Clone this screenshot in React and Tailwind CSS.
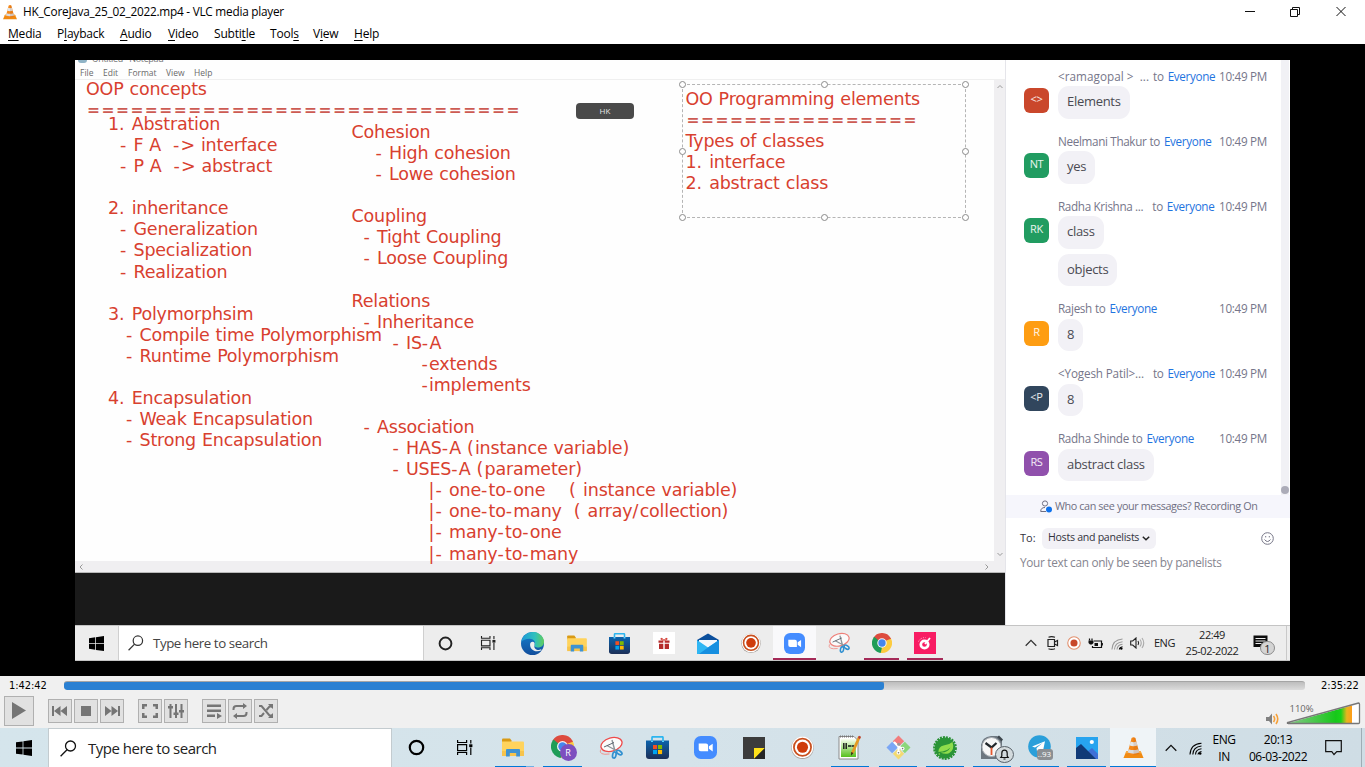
import React from "react";

/* ---------- icons ---------- */

const Cone = ({ size = 16 }) => (
  <svg width={size} height={size} viewBox="0 0 24 24">
    <path d="M4.5 16h15l3 7h-21z" fill="#f08a12" />
    <path d="M4.5 16h15l.8 2H3.7z" fill="#f9a83c" />
    <path d="M10 2.2Q12 .6 14 2.2l4.3 16.4q-6.300 3-12.600 0z" fill="#f5881a" />
    <path d="M9 5.800q3 1.200 6 0l1.100 4.200q-4.100 1.400-8.200 0z" fill="#e3e7ea" />
    <path d="M6.900 13.700q5.100 1.800 10.200 0l1 3.600q-6.100 2.400-12.200 0z" fill="#dadde0" />
    <path d="M12 1.500q1.300 0 2 .7l4.300 16.400q-3 1.500-6.300 1.500z" fill="#a84300" opacity=".16" />
  </svg>
);

const WinLogo = ({ size = 16 }) => (
  <svg width={size} height={size} viewBox="0 0 16 16" fill="#000">
    <path d="M0 2.300 6.600 1.400v6.200H0zM7.400 1.250 16 0v7.600H7.400zM0 8.400h6.600v6.200L0 13.700zM7.400 8.400H16V16l-8.600-1.200z" />
  </svg>
);

const Search = ({ size = 17, color = "#111" }) => (
  <svg width={size} height={size} viewBox="0 0 17 17" fill="none" stroke={color} strokeWidth="1.300">
    <circle cx="10.500" cy="6" r="5" />
    <path d="M7 9.700.6 16.200" />
  </svg>
);

const Cortana = ({ size = 17, color = "#000" }) => (
  <svg width={size} height={size} viewBox="0 0 17 17" fill="none" stroke={color} strokeWidth="2.200">
    <circle cx="8.500" cy="8.500" r="6.700" />
  </svg>
);

const TaskView = ({ size = 17, color = "#000" }) => (
  <svg width={size} height={size} viewBox="0 0 17 17" fill="none" stroke={color} strokeWidth="1.200">
    <path d="M1.600 1v2.500h9V1M1.600 16v-2.500h9V16" />
    <path d="M1.600 5.600h9v6h-9zM14.800 1v3.400M14.800 8.500V16" />
    <path d="M13.200 5.300h3.200v2.800h-3.200z" fill={color} stroke="none" />
  </svg>
);

const Folder = ({ w = 22, h = 19 }) => (
  <svg width={w} height={h} viewBox="0 0 22 19">
    <path d="M0 1.500Q0 .5 1 .5h7l1.500 2V5H0z" fill="#d99a14" />
    <path d="M0 3.500h21q1 0 1 1V17H0z" fill="#ffd35c" />
    <path d="M0 13h22v5H0z" fill="#f7c44c" />
    <path d="M4 18.500V12q0-1 1-1h12q1 0 1 1v6.500h-3.800V15H7.800v3.500z" fill="#3f93d2" />
  </svg>
);

const Chrome = ({ size = 22 }) => (
  <svg width={size} height={size} viewBox="0 0 24 24">
    <path d="M12 12 1.600 6A12 12 0 0 1 22.400 6z" fill="#dd4b3e" />
    <path d="M12 12 22.400 6A12 12 0 0 1 12 24z" fill="#fccb3f" />
    <path d="M12 12v12A12 12 0 0 1 1.600 6z" fill="#1f9d58" />
    <path d="M12 6h10.400a12 12 0 0 1 .5 1L17 9z" fill="#dd4b3e" />
    <path d="m17.200 15-5.200 9-1.500-.1L12 17z" fill="#fccb3f" />
    <path d="M6.800 15 1.600 6l1-1.400L8 9z" fill="#1f9d58" />
    <circle cx="12" cy="12" r="5.700" fill="#f4f6f8" />
    <circle cx="12" cy="12" r="4.400" fill="#4686ee" />
  </svg>
);

const ChromeProfile = () => (
  <div className="relative h-[26px] w-[24px]">
    <Chrome size={23} />
    <span className="absolute left-[9px] top-[9px] flex h-[17px] w-[17px] items-center justify-center rounded-full bg-[#7d4fbf] text-[9px] leading-none text-white">R</span>
  </div>
);

const Snip = ({ size = 24, faded = false }) => (
  <svg width={size} height={size} viewBox="0 0 24 24" fill="none">
    <ellipse cx="12.500" cy="8.500" rx="10.800" ry="6.600" transform="rotate(-16 12.500 8.500)" fill="#fbfbfb" stroke={faded ? "#ee7f78" : "#ee4a4a"} strokeWidth="1.300" />
    <path d="M1.500 13.500q-2 6 9 4.500" stroke="#f08d86" strokeWidth=".9" />
    <path d="M8 9.500 18 15M13 4l3 11" stroke="#8d949a" strokeWidth="1.400" />
    <path d="m5 11 10-4.500" stroke="#5c6670" strokeWidth="1" />
    <ellipse cx="15.300" cy="19" rx="1.700" ry="3.100" transform="rotate(12 15.300 19)" stroke="#2f8fd0" strokeWidth="1.700" />
    <ellipse cx="20.300" cy="16.600" rx="1.700" ry="3" transform="rotate(-55 20.300 16.600)" stroke="#2f8fd0" strokeWidth="1.700" />
  </svg>
);

const Store = ({ size = 23 }) => (
  <svg width={size} height={size} viewBox="0 0 23 23">
    <defs>
      <linearGradient id="storeBody" x1="0" y1="0" x2="0" y2="1">
        <stop offset="0" stopColor="#0b63ad" />
        <stop offset="1" stopColor="#1c2f57" />
      </linearGradient>
    </defs>
    <path d="M6 6V1.500Q6 .8 6.700.8h9.600q.7 0 .7.700V6" fill="none" stroke="#2cb5ef" strokeWidth="1.700" />
    <path d="M0 4.500h23V20q0 3-3 3H3q-3 0-3-3z" fill="url(#storeBody)" />
    <path d="M5 4.500h2V6H5zM16 4.500h2V6h-2z" fill="#5fd0fa" />
    <path d="M7 9h4.100v4.100H7z" fill="#f25022" />
    <path d="M12 9h4.100v4.100H12z" fill="#7fba00" />
    <path d="M7 14h4.100v4.100H7z" fill="#00a4ef" />
    <path d="M12 14h4.100v4.100H12z" fill="#ffb900" />
  </svg>
);

const Zoom = ({ size = 22 }) => (
  <svg width={size} height={size} viewBox="0 0 22 22">
    <rect width="22" height="22" rx="6.500" fill="#448cff" />
    <path d="M4.500 7.200h7q2 0 2 2v5.500h-7q-2 0-2-2zM14.300 9.800l3.600-2.500v7.500l-3.600-2.500z" fill="#fff" />
  </svg>
);

const Sticky = () => (
  <svg width="22" height="22" viewBox="0 0 22 22">
    <path d="M0 0h22v22H0z" fill="#3c3c3c" />
    <path d="M11 11h11L11 22z" fill="#ffe11a" />
    <path d="M22 11v11H11z" fill="#262626" />
  </svg>
);

const Recorder = ({ size = 22 }) => (
  <svg width={size} height={size} viewBox="0 0 22 22">
    <circle cx="11" cy="11.300" r="10.700" fill="#a9a29d" />
    <circle cx="11" cy="10.800" r="10.300" fill="#fff" />
    <circle cx="11" cy="10.800" r="8.200" fill="none" stroke="#c9501f" strokeWidth="1.700" />
    <circle cx="11" cy="10.800" r="5.300" fill="#cf3c0c" />
  </svg>
);

const NotepadPP = () => (
  <svg width="24" height="25" viewBox="0 0 24 25">
    <defs>
      <linearGradient id="npGreen" x1="0" y1="0" x2="0" y2="1">
        <stop offset="0" stopColor="#fafff2" />
        <stop offset="1" stopColor="#56c01d" />
      </linearGradient>
    </defs>
    <path d="M1 1.500h15l4 4V24H1z" fill="#fff" stroke="#8b8b8b" strokeWidth="1" />
    <path d="M3 4h15v18H3z" fill="url(#npGreen)" />
    <path d="M2 1.500h14" stroke="#777" strokeWidth="1.800" strokeDasharray="1 1" />
    <path d="M5.800 8v6M8.200 8v6M10 11h3M13.500 11h2.500" stroke="#161616" strokeWidth="1.400" />
    <path d="m21.500 1.500-7.200 16.700" stroke="#e59a22" strokeWidth="2.800" />
    <path d="m21 .8 2 1-1 2.200-2-1z" fill="#b63b3b" />
    <path d="m13.200 17 2.300 1-2.500 2.700z" fill="#3a2a16" />
  </svg>
);

const Git = () => (
  <svg width="25" height="25" viewBox="0 0 25 25">
    <g transform="rotate(45 12.500 12.500)">
      <path d="M4 4h8v8H4z" fill="#f27d7d" />
      <path d="M13 4h8v8h-8z" fill="#8cd67a" />
      <path d="M4 13h8v8H4z" fill="#7ba7f5" />
      <path d="M13 13h8v8h-8z" fill="#f3da72" />
    </g>
    <path d="m8 7 4.500 4.500V18M12.500 11.500l4 2.200" fill="none" stroke="#fff" strokeWidth="2" />
    <circle cx="12.700" cy="9.300" r="1.500" fill="#999" />
    <circle cx="12.500" cy="17.700" r="1.900" fill="#fff" />
    <circle cx="16.600" cy="13.600" r="1.900" fill="#fff" />
    <circle cx="12.500" cy="17.700" r=".8" fill="#777" />
    <circle cx="16.600" cy="13.600" r=".8" fill="#777" />
  </svg>
);

const Spring = () => (
  <svg width="24" height="24" viewBox="0 0 24 24">
    <circle cx="12" cy="12" r="10.700" fill="none" stroke="#2a9135" strokeWidth="2.400" strokeDasharray="2 1" />
    <circle cx="12" cy="12" r="10.400" fill="#2a9437" />
    <path d="M19.500 6q2.500 8-3.500 11.200-4 1.500-8.500-.7 6.500.7 10-5-3.500 3.500-8 4-3 .2-4.100.5Q5.500 10.500 10.500 9.500q5.500-.5 9-3.500z" fill="#8fdc4c" />
    <circle cx="6.300" cy="18" r=".8" fill="#8fdc4c" />
  </svg>
);

const Clock = () => (
  <div className="relative h-[26px] w-[26px]">
    <svg width="25" height="25" viewBox="0 0 25 25">
      <path d="M2 10Q3 2 12 1h6l5 5v18H2z" fill="#6d7780" />
      <path d="m18 2 2-1.500 4 4-1.500 2z" fill="#3e464d" />
      <circle cx="12.500" cy="12" r="9.500" fill="#f7f7f7" stroke="#aab0b5" strokeWidth="1" />
      <path d="m6.500 8 6 4.500 5-4.500" fill="none" stroke="#22272b" strokeWidth="2.300" />
      <path d="M12.500 12.500V20" stroke="#e4572e" strokeWidth="1.800" />
    </svg>
    <svg className="absolute left-[16px] top-[11px]" width="19" height="17" viewBox="0 0 19 17">
      <ellipse cx="9.500" cy="8.500" rx="9" ry="8" fill="#d3dadd" stroke="#59626a" strokeWidth="1" />
      <path d="M5.800 11.500h7.400l-1-1.500V7.200q0-3-2.700-3t-2.700 3V10zM8.500 13h2" fill="none" stroke="#111" strokeWidth="1.200" />
    </svg>
  </div>
);

const Telegram = () => (
  <div className="relative h-[26px] w-[24px]">
    <svg width="23" height="23" viewBox="0 0 23 23">
      <circle cx="11.500" cy="11.500" r="11.300" fill="#2a9fda" />
      <path d="m4 11.500 13-5.300-2.300 11-3.700-2.700-2 2-.5-3.500 6-5-7.500 4.500z" fill="#fff" />
    </svg>
    <span className="absolute left-[9px] top-[14px] flex h-[11px] w-[16px] items-center justify-center rounded-[3px] bg-[#8b8f93] text-[8px] leading-none text-white">..93</span>
  </div>
);

const Photos = () => (
  <svg width="22" height="22" viewBox="0 0 22 22">
    <path d="M0 0h22v22H0z" fill="#27a4ef" />
    <path d="M11 22 7 18l9-7 6 6v5z" fill="#3f6fd6" />
    <path d="m0 11 5-4 15 15H0z" fill="#113a77" />
    <circle cx="15.800" cy="5" r="2.100" fill="#fff" />
  </svg>
);

const Edge = () => (
  <svg width="23" height="23" viewBox="0 0 24 24">
    <defs>
      <linearGradient id="edgeTop" x1="0" y1="0" x2="1" y2="0">
        <stop offset="0" stopColor="#1d98d8" />
        <stop offset=".6" stopColor="#2fc0bd" />
        <stop offset="1" stopColor="#62cd5c" />
      </linearGradient>
      <linearGradient id="edgeBot" x1="0" y1="0" x2="0" y2="1">
        <stop offset="0" stopColor="#1580cf" />
        <stop offset="1" stopColor="#124e9c" />
      </linearGradient>
    </defs>
    <circle cx="12" cy="12" r="12" fill="url(#edgeBot)" />
    <path d="M.2 10.500C2 .5 11 0 13 0c7 .3 11 6 11 10 0 4.500-3.500 6.500-7 6.200-2.800-.2-4-1.400-2.800-2.800C16 10.500 13 7 9 7 5 7 1.500 8.500.2 10.500z" fill="url(#edgeTop)" />
    <path d="M9.500 12.500c-.5 6 5.500 9.500 12 6.500l-.6-1C18 20 13 18 14 13.500c1.500-4-4-4.500-4.500-1z" fill="#ededed" />
  </svg>
);

const Gift = () => (
  <div className="flex h-[22px] w-[22px] items-center justify-center bg-white">
    <svg width="12" height="13" viewBox="0 0 12 13">
      <path d="M.5 3.500h4.800v2.200H.5zM6.700 3.500h4.800v2.200H6.700zM1 6.700h4.300V12H1zM6.700 6.700H11V12H6.700z" fill="#b52b2b" />
      <path d="M5.700 3.200Q3 3.500 2.800 1.700 3.800 0 5.700 3.200zM6.300 3.200Q9 3.500 9.200 1.700 8.200 0 6.300 3.200z" fill="none" stroke="#d43c33" strokeWidth="1" />
    </svg>
  </div>
);

const Mail = () => (
  <svg width="22" height="21" viewBox="0 0 22 21">
    <path d="M0 7 11 .5 22 7v4H0z" fill="#0b4f9c" />
    <path d="M2 7h18v7H2z" fill="#f3f7fb" />
    <path d="M0 7l11 7.500L22 7v14H0z" fill="#2fb6f3" />
    <path d="M22 7v14H2l9-6.500z" fill="#168fe0" />
  </svg>
);

const PinkApp = () => (
  <svg width="22" height="22" viewBox="0 0 22 22">
    <path d="M0 0h22v22H0z" fill="#f81c63" />
    <circle cx="10.500" cy="12.500" r="3.700" fill="none" stroke="#fff" strokeWidth="2.700" />
    <path d="m11 12 5-6" stroke="#fff" strokeWidth="1.800" />
    <path d="M4.500 9.500q2-4 7-4" fill="none" stroke="#ffb3cc" strokeWidth="1" strokeDasharray="1 1" />
  </svg>
);

const Chevron = ({ color = "#111" }) => (
  <svg width="12" height="8" viewBox="0 0 12 8" fill="none" stroke={color} strokeWidth="1.300">
    <path d="m.7 6.700 5.300-5.300 5.300 5.300" />
  </svg>
);

const Wifi = ({ size = 13, dim = "#000" }) => (
  <svg width={size} height={size} viewBox="0 0 13 13" fill="none" strokeWidth="1.100">
    <path d="M1 12.500Q1.500 2 12.500 1.200" stroke={dim} />
    <path d="M3.800 12.500Q4 5 12.500 4" stroke={dim} />
    <path d="M6.500 12.500Q6.700 7.500 12.500 6.800" stroke={dim} />
    <path d="M9 12.500Q9.300 10 12.500 9.500" stroke="#000" />
    <circle cx="11.200" cy="11.500" r="1.300" fill="#000" />
  </svg>
);

/* ---------- VLC window ---------- */

const MenuItem = ({ pre = "", hot, post = "", className }) => (
  <span className={className}>
    {pre}
    <span className="underline decoration-1 underline-offset-[2px]">{hot}</span>
    {post}
  </span>
);

function TitleBar() {
  return (
    <div className="flex h-[23px] items-center bg-white pl-[2px]">
      <Cone size={16} />
      <span className="ml-[5px] w-[1221px] text-[11.800px] tracking-[-0.240px]">HK_CoreJava_25_02_2022.mp4 - VLC media player</span>
      <svg width="110" height="12" viewBox="0 0 110 12" fill="none" stroke="#111" strokeWidth="1">
        <path d="M1 5.500h10" />
        <path d="M46.500 3.500h7v7h-7zM48.500 3.500v-2h7v7h-2" />
        <path d="m92.500 1 9 9m0-9-9 9" />
      </svg>
    </div>
  );
}

function MenuBar() {
  return (
    <div className="flex h-[21px] items-center bg-white pl-[8px] text-[12px] tracking-[-0.200px]">
      <MenuItem className="w-[49px]" hot="M" post="edia" />
      <MenuItem className="w-[63px]" pre="P" hot="l" post="ayback" />
      <MenuItem className="w-[48px]" hot="A" post="udio" />
      <MenuItem className="w-[46px]" hot="V" post="ideo" />
      <MenuItem className="w-[56px]" pre="Subti" hot="t" post="le" />
      <MenuItem className="w-[43px]" pre="Tool" hot="s" />
      <MenuItem className="w-[41px]" pre="V" hot="i" post="ew" />
      <MenuItem className="" hot="H" post="elp" />
    </div>
  );
}

/* ---------- shared notes ---------- */

/* Punctuation is set a little wider than the letters. */
const Line = ({ className = "", children }) => (
  <div className={"h-[21.080px] whitespace-pre " + className}>
    {String(children || " ")
      .split(/([-.()|/]+)/)
      .map((part, i) => (i % 2 ? <span key={i} className="tracking-[1.200px]">{part}</span> : part))}
  </div>
);

const Rule = ({ children }) => (
  <div className="h-[21.080px] pl-[1px] text-[15.500px] font-bold tracking-[1.480px] whitespace-pre text-[#cd5b53]">{children}</div>
);

const noteText = "font-['DejaVu_Sans',sans-serif] text-[17.500px] leading-[21.080px] tracking-[-0.200px] [word-spacing:0.600px] text-[#d8402f]";

function Handle({ className }) {
  return <span className={"absolute h-[7px] w-[7px] rounded-full border border-[#8a8a8a] bg-white " + className} />;
}

function Annotations() {
  return (
    <>
      <div className={"absolute left-[11px] top-[18.500px] " + noteText}>
        <Line>OOP concepts</Line>
        <Rule>==============================</Rule>
      </div>
      <div className={"absolute left-[33px] top-[54px] " + noteText}>
        <Line>1. Abstration</Line>
        <Line className="pl-[12px]">- F A  -&gt; interface</Line>
        <Line className="pl-[12px]">- P A  -&gt; abstract</Line>
        <Line />
        <Line>2. inheritance</Line>
        <Line className="pl-[12px]">- Generalization</Line>
        <Line className="pl-[12px]">- Specialization</Line>
        <Line className="pl-[12px]">- Realization</Line>
        <Line />
        <Line>3. Polymorphsim</Line>
        <Line className="pl-[18px]">- Compile time Polymorphism</Line>
        <Line className="pl-[18px]">- Runtime Polymorphism</Line>
        <Line />
        <Line>4. Encapsulation</Line>
        <Line className="pl-[18px]">- Weak Encapsulation</Line>
        <Line className="pl-[18px]">- Strong Encapsulation</Line>
      </div>
      <div className={"absolute left-[276.500px] top-[62px] " + noteText}>
        <Line>Cohesion</Line>
        <Line className="pl-[24px]">- High cohesion</Line>
        <Line className="pl-[24px]">- Lowe cohesion</Line>
        <Line />
        <Line>Coupling</Line>
        <Line className="pl-[12px]">- Tight Coupling</Line>
        <Line className="pl-[12px]">- Loose Coupling</Line>
        <Line />
        <Line>Relations</Line>
        <Line className="pl-[12px]">- Inheritance</Line>
        <Line className="pl-[41px]">- IS-A</Line>
        <Line className="pl-[70px]">-extends</Line>
        <Line className="pl-[70px]">-implements</Line>
        <Line />
        <Line className="pl-[12px]">- Association</Line>
        <Line className="pl-[41px]">- HAS-A (instance variable)</Line>
        <Line className="pl-[41px]">- USES-A (parameter)</Line>
        <Line className="pl-[77px]">|- one-to-one    ( instance variable)</Line>
        <Line className="pl-[77px]">|- one-to-many  ( array/collection)</Line>
        <Line className="pl-[77px]">|- many-to-one</Line>
        <Line className="pl-[77px]">|- many-to-many</Line>
      </div>
      <div className="absolute left-[501px] top-[43px] flex h-[16px] w-[58px] items-center justify-center rounded-[4px] bg-[#4a4a4a] text-[8px] text-[#e4e4e4]">HK</div>
      <div className={"absolute left-[607px] top-[24px] h-[134px] w-[284px] border border-dashed border-[#b5b5b5] pl-[2.500px] pt-[4px] " + noteText}>
        <Line>OO Programming elements</Line>
        <Rule>================</Rule>
        <Line>Types of classes</Line>
        <Line>1. interface</Line>
        <Line>2. abstract class</Line>
        <Handle className="-left-[4px] -top-[4px]" />
        <Handle className="left-[138px] -top-[4px]" />
        <Handle className="-right-[4px] -top-[4px]" />
        <Handle className="-left-[4px] top-[63px]" />
        <Handle className="-right-[4px] top-[63px]" />
        <Handle className="-left-[4px] -bottom-[4px]" />
        <Handle className="left-[138px] -bottom-[4px]" />
        <Handle className="-right-[4px] -bottom-[4px]" />
      </div>
    </>
  );
}

function SharedScreen() {
  return (
    <div className="relative flex w-[930px] shrink-0 flex-col overflow-hidden bg-[#1a1a1a]">
      <div className="flex h-[513px] flex-col border-b border-[#b9b9b9] bg-[#fefefe]">
        <div className="flex h-[5px] items-end overflow-hidden pb-[2px] pl-[3px] text-[9px] leading-[9px] tracking-[-0.350px] text-[#777]">
          <span className="mr-[5px] h-[3px] w-[9px] rounded-b-sm bg-[#8fb3c6]" />
          <span>Untitled - Notepad</span>
        </div>
        <div className="flex h-[15px] items-center border-b border-[#efefef] pl-[5px] pt-[2px] text-[8.500px] text-[#6a6a6a]">
          <span className="w-[23px]">File</span>
          <span className="w-[25px]">Edit</span>
          <span className="w-[38px]">Format</span>
          <span className="w-[28px]">View</span>
          <span>Help</span>
        </div>
        <div className="flex flex-1">
          <div className="flex-1" />
          <div className="flex w-[11px] flex-col items-center justify-between bg-[#f0eff1] py-[4px]">
            <svg width="6" height="5" viewBox="0 0 6 5" fill="none" stroke="#999"><path d="m.5 4 2.500-2.500L5.500 4" /></svg>
            <svg width="6" height="5" viewBox="0 0 6 5" fill="none" stroke="#999"><path d="m.5 1 2.500 2.500L5.500 1" /></svg>
          </div>
        </div>
        <div className="flex h-[11px] items-center justify-between bg-[#f0eff1] pl-[4px] pr-[16px]">
          <svg width="4" height="6" viewBox="0 0 4 6" fill="none" stroke="#999"><path d="M3.500.5 1 3l2.500 2.500" /></svg>
          <svg width="4" height="6" viewBox="0 0 4 6" fill="none" stroke="#999"><path d="M.5.500 3 3 .5 5.500" /></svg>
        </div>
      </div>
      <Annotations />
    </div>
  );
}

/* ---------- chat ---------- */

const messages = [
  { name: "<ramagopal >  ...", gap: "ml-[4px]", track: "tracking-[0.050px]", initials: "<>", color: "bg-[#ca472b]", texts: ["Elements"] },
  { name: "Neelmani Thakur", gap: "ml-[3px]", track: "", initials: "NT", color: "bg-[#219c61]", texts: ["yes"] },
  { name: "Radha Krishna ...", gap: "ml-[9px]", track: "", initials: "RK", color: "bg-[#219c61]", texts: ["class", "objects"] },
  { name: "Rajesh", gap: "ml-[3px]", track: "", initials: "R", color: "bg-[#fe9d12]", texts: ["8"] },
  { name: "<Yogesh Patil>...", gap: "ml-[9px]", track: "tracking-[-0.150px]", initials: "<P", color: "bg-[#31465d]", texts: ["8"] },
  { name: "Radha Shinde", gap: "ml-[3px]", track: "", initials: "RS", color: "bg-[#9050ac]", texts: ["abstract class"] },
];

function Message({ m }) {
  return (
    <div className="mb-[13.400px]">
      <div className="flex h-[19px] items-center pl-[52px] pr-[14px] text-[11.700px] tracking-[-0.340px] text-[#76768a]">
        <span className={"whitespace-pre " + m.track}>{m.name}</span>
        <span className={m.gap}>to</span>
        <span className="ml-[4px] text-[#1f74e0]">Everyone</span>
        <span className="ml-auto whitespace-nowrap tracking-[-0.300px]">10:49 PM</span>
      </div>
      <div className="flex pl-[18px]">
        <div className={"mt-[2px] flex h-[25px] w-[25px] items-center justify-center rounded-[6px] pb-[2px] text-[11px] tracking-[-0.300px] text-white/90 " + m.color}>{m.initials}</div>
        <div className="ml-[9px] flex flex-col items-start gap-[5px]">
          {m.texts.map((t) => (
            <div key={t} className="flex h-[32.600px] items-center rounded-[11px] bg-[#f2f1f6] px-[9px] pb-[1px] text-[13px] tracking-[-0.300px] text-[#4a4a52]">{t}</div>
          ))}
        </div>
      </div>
    </div>
  );
}

function Chat() {
  return (
    <div className="flex w-[285px] shrink-0 flex-col border-l border-[#e5e5ea] bg-white">
      <div className="flex h-[435px]">
        <div className="flex-1 overflow-hidden pt-[7px]">
          {messages.map((m) => <Message key={m.name} m={m} />)}
        </div>
        <div className="mr-px flex w-[8px] flex-col justify-end bg-[#f1f1f5] pb-[1px]">
          <span className="h-[8px] w-[8px] rounded-full bg-[#acacb8]" />
        </div>
      </div>
      <div className="flex h-[23px] items-center bg-[#f6f6fc] pl-[34px] text-[10.800px] tracking-[-0.390px] whitespace-nowrap text-[#6f6f82]">
        <svg className="mr-[2px]" width="13" height="13" viewBox="0 0 13 13" fill="none" stroke="#6f6f82">
          <circle cx="5" cy="3.500" r="2.600" />
          <path d="M6 11.500H.7Q.7 7.500 5 7.500" />
          <circle cx="9" cy="9.500" r="3" fill="#0e72ed" stroke="none" />
        </svg>
        Who can see your messages? Recording On
      </div>
      <div className="mt-[9px] flex h-[22px] items-center pl-[14px] pr-[16px] text-[11px] text-[#33333d]">
        <span className="w-[22px]">To:</span>
        <span className="flex h-[21px] w-[114px] items-center rounded-[6px] bg-[#f2f1f6] pl-[6px] text-[10.600px] font-medium tracking-[-0.280px] whitespace-nowrap">
          Hosts and panelists
          <svg className="ml-[3px]" width="8" height="5" viewBox="0 0 8 5" fill="none" stroke="#222" strokeWidth="1.500"><path d="m.8.700 3.200 3L7.200.700" /></svg>
        </span>
        <svg className="ml-auto" width="13" height="13" viewBox="0 0 13 13" fill="none" stroke="#777788">
          <circle cx="6.500" cy="6.500" r="5.800" />
          <path d="M3.500 7.500q3 4 6 0M4.700 4v1.400M8.300 4v1.400" />
        </svg>
      </div>
      <div className="pl-[14px] pt-[4px] text-[11.800px] leading-[18px] tracking-[-0.300px] text-[#85858f]">Your text can only be seen by panelists</div>
    </div>
  );
}

/* ---------- recorded taskbar ---------- */

const Cell = ({ className, bar = "", children }) => (
  <div className={"relative flex items-center justify-center " + className}>
    {children}
    {bar && <span className={"absolute bottom-0 " + bar} />}
  </div>
);

function RecordedTaskbar() {
  return (
    <div className="flex h-[36px] border-t border-b border-[#c4c4c4] bg-[#ededed]">
      <Cell className="w-[43px]"><WinLogo size={15} /></Cell>
      <div className="flex w-[306px] items-center border-x border-[#cfcfcf] bg-white pl-[9px] text-[13.300px] tracking-[-0.420px] text-[#444]">
        <Search size={16} color="#333" />
        <span className="ml-[9px] pt-[1px]">Type here to search</span>
      </div>
      <Cell className="w-[42px]"><Cortana size={15} color="#222" /></Cell>
      <Cell className="w-[43px]"><TaskView size={16} color="#222" /></Cell>
      <Cell className="w-[47px]"><Edge /></Cell>
      <Cell className="w-[41px]"><Folder w={20} h={17} /></Cell>
      <Cell className="w-[45px]"><Store size={21} /></Cell>
      <Cell className="w-[44px]"><Gift /></Cell>
      <Cell className="w-[43px]"><Mail /></Cell>
      <Cell className="w-[44px]"><Recorder size={20} /></Cell>
      <Cell className="w-[43px] bg-[#f9f9fb]" bar="inset-x-0 h-[2px] bg-[#a52a58]"><Zoom size={21} /></Cell>
      <Cell className="w-[45px]"><Snip size={22} faded /></Cell>
      <Cell className="w-[41px]" bar="inset-x-[3px] h-[2px] bg-[#a52a58]"><Chrome size={20} /></Cell>
      <Cell className="w-[46px]" bar="inset-x-[5px] h-[2px] bg-[#a52a58]"><PinkApp /></Cell>
      <div className="flex flex-1 items-center pl-[77px]">
        <Chevron color="#333" />
        <svg className="ml-[10px]" width="12" height="14" viewBox="0 0 12 14" fill="none" stroke="#222" strokeWidth="1.200">
          <path d="M1 3.500h6.500v7H1zM7.500 6 10.500 4.500v5L7.500 8M1.500 1.300q3-1.200 6.500 0M1.500 12.700q3 1.200 6.500 0" />
        </svg>
        <svg className="ml-[8px]" width="14" height="14" viewBox="0 0 13 13">
          <circle cx="6.500" cy="6.500" r="5.800" fill="#fff" stroke="#e2906e" />
          <circle cx="6.500" cy="6.500" r="3.300" fill="#c8482a" />
        </svg>
        <svg className="ml-[7px]" width="15" height="11" viewBox="0 0 15 11" fill="none" stroke="#111" strokeWidth="1.200">
          <path d="M6 3h7.500v6.500h-9V8M14.300 5v2.500M1.500.500v2M4 .5v2" />
          <path d="M.5 2.500h5V5L4 6.500H2L.5 5z" fill="#111" stroke="none" />
          <path d="M6.500 5h3.500v3H6.500z" fill="#111" stroke="none" />
        </svg>
        <span className="ml-[8px] pt-[1px]"><Wifi size={12} dim="#999" /></span>
        <svg className="ml-[7px]" width="15" height="12" viewBox="0 0 15 12" fill="none" stroke="#222" strokeWidth="1.100">
          <path d="M.7 4h2L6 1v10L2.700 8h-2z" />
          <path d="M8 4q1.300 2 0 4" />
          <path d="M10 2.500q2.500 3.500 0 7M12 1q3.500 5 0 10" stroke="#aaa" />
        </svg>
        <span className="ml-[9px] w-[21px] text-[11px] tracking-[-0.500px] text-[#222]">ENG</span>
        <div className="ml-[8px] flex w-[58px] flex-col items-center text-[11px] leading-[16px] tracking-[-0.450px] text-[#222]">
          <span>22:49</span>
          <span>25-02-2022</span>
        </div>
        <div className="relative ml-[12px] h-[22px] w-[22px]">
          <svg width="15" height="17" viewBox="0 0 15 17">
            <path d="M.5 3.500h14V15H.5z" fill="#0c0c0c" />
            <path d="M2.500 6.500h10M2.500 9h10M2.500 11.500h6" stroke="#eee" />
          </svg>
          <span className="absolute left-[7px] top-[9px] flex h-[14px] w-[15px] items-center justify-center rounded-full border border-[#8b8b8b] bg-[#d4d4d4] text-[11px] leading-none text-[#222]">1</span>
        </div>
      </div>
      <div className="w-[4px] border-l border-[#c9c9c9]" />
    </div>
  );
}

/* ---------- player controls ---------- */

const Btn = ({ className = "", children }) => (
  <button className={"flex h-[24px] w-[24px] items-center justify-center border border-[#b0b0b0] bg-[#e1e1e1] " + className}>
    <svg width="18" height="18" viewBox="0 0 18 18" fill="#757575" stroke="none">{children}</svg>
  </button>
);

function Controls() {
  return (
    <div className="h-[52px] bg-[#f0f0f0]">
      <div className="flex h-[19px] items-center font-['DejaVu_Sans_Condensed','DejaVu_Sans',sans-serif] text-[11px] text-black">
        <span className="w-[64px] pl-[9px] pt-[2px] tracking-[-0.050px]">1:42:42</span>
        <div className="mb-[1px] flex h-[9px] w-[1241px] overflow-hidden rounded-[3px] border-t border-[#a5a5a5] bg-gradient-to-b from-[#bdbdbd] to-[#dcdcdc]">
          <div className="-mt-px h-[9px] w-[820px] rounded-[3px] border-t border-[#6d8caa] bg-[#2a80d2]" />
        </div>
        <span className="ml-[16px] pt-[2px] tracking-[-0.050px]">2:35:22</span>
      </div>
      <div className="flex h-[33px] items-center pb-[2px] pl-[4px]">
        <button className="flex h-[30px] w-[30px] items-center justify-center border border-[#b0b0b0] bg-[#e1e1e1]">
          <svg width="14" height="17" viewBox="0 0 14 17"><path d="M0 0l14 8.500L0 17z" fill="#757575" /></svg>
        </button>
        <div className="ml-[14px] flex gap-[2px]">
          <Btn><path d="M1 4h2v10H1zM3 9l6.500-5v10zM9.500 9 16 4v10z" /></Btn>
          <Btn><path d="M4 4h10v10H4z" /></Btn>
          <Btn><path d="M15 4h2v10h-2zM15 9 8.500 4v10zM8.500 9 2 4v10z" /></Btn>
        </div>
        <div className="ml-[14px] flex gap-[2px]">
          <Btn><path d="M1 2h5v2.500H3.500V7H1zM17 2h-5v2.500h2.500V7H17zM1 16h5v-2.500H3.500V11H1zM17 16h-5v-2.500h2.500V11H17z" /></Btn>
          <Btn><path d="M2.500 2h2v14h-2zM8 2h2v14H8zM13.500 2h2v14h-2zM1 4h5v2.500H1zM6.500 10.500h5V13h-5zM12 8h5v2.500h-5z" /></Btn>
        </div>
        <div className="ml-[14px] flex gap-[2px]">
          <Btn><path d="M2 2.500h14V5H2zM2 7.500h14V10H2zM2 12.500h8V15H2zM12 11l5 3-5 3z" /></Btn>
          <Btn>
            <path d="M2.500 8V7q0-3 3-3H13M15.500 10v1q0 3-3 3H5" fill="none" stroke="#757575" strokeWidth="2" />
            <path d="m12 1 4 3-4 3zM6 11l-4 3 4 3z" />
          </Btn>
          <Btn>
            <path d="M2 4h2.500l8 9.500H15M2 14h2.500l2.500-3M9.500 8l3-3.500H15" fill="none" stroke="#757575" strokeWidth="2" />
            <path d="M11 2h5v5zM11 16h5v-5z" />
          </Btn>
        </div>
        <svg className="ml-auto mt-[2px]" width="102" height="27" viewBox="0 0 102 27">
          <defs>
            <linearGradient id="volume" x1="0" x2="1" y1="0" y2="0">
              <stop offset="0" stopColor="#8cc78c" />
              <stop offset=".75" stopColor="#17c81a" />
              <stop offset=".83" stopColor="#19d219" />
              <stop offset=".92" stopColor="#eab41f" />
              <stop offset="1" stopColor="#ff9c1a" />
            </linearGradient>
          </defs>
          <g transform="translate(0 2)">
            <path d="M3 17h3l3-3.500v11L6 21H3z" fill="#808080" />
            <path d="M10.500 16q2.300 3 0 6M13 14q3.500 5 0 10" fill="none" stroke="#f5a13a" strokeWidth="1.600" />
          </g>
          <path d="M24 25.500 96.500 6v19.500z" fill="#fff" />
          <path d="M24 25.500 89 7.500v18z" fill="url(#volume)" />
          <path d="M24.500 26v-1.500L95.500 5q1 0 1 1v18.500q0 1-1 1H25" fill="none" stroke="#777" strokeWidth="1.300" />
          <text x="26.500" y="13.500" fontSize="9.500" fill="#666" fontFamily="Open Sans, sans-serif">110%</text>
        </svg>
      </div>
    </div>
  );
}

/* ---------- desktop taskbar ---------- */

const running = "inset-x-[5px] h-px bg-[#0078d7]";

function Taskbar() {
  return (
    <div className="flex h-[39px] bg-linear-to-r from-[#d5e5ec] via-[#d5e3ea] to-[#cfdde5]">
      <Cell className="w-[48px]"><WinLogo size={16} /></Cell>
      <div className="flex w-[344px] items-center border-x border-t border-[#c3cbcf] bg-white pl-[11px] text-[15px] tracking-[-0.500px] text-[#222]">
        <Search size={17} />
        <span className="ml-[11px]">Type here to search</span>
      </div>
      <Cell className="w-[48px]"><Cortana /></Cell>
      <Cell className="w-[48px]"><TaskView /></Cell>
      <Cell className="w-[50px]" bar="left-[7px] w-[39px] h-px bg-linear-to-r from-[#0078d7] from-80% to-[#6fb1e6] to-80%"><Folder /></Cell>
      <Cell className="w-[49px]" bar={running}><ChromeProfile /></Cell>
      <Cell className="w-[47px]"><Snip /></Cell>
      <Cell className="w-[47px]"><Store /></Cell>
      <Cell className="w-[49px]"><Zoom size={23} /></Cell>
      <Cell className="w-[48px]"><Sticky /></Cell>
      <Cell className="w-[48px]"><Recorder size={23} /></Cell>
      <Cell className="w-[48px]" bar={running}><NotepadPP /></Cell>
      <Cell className="w-[48px]" bar={running}><Git /></Cell>
      <Cell className="w-[46px]" bar="inset-x-[4px] h-px bg-[#0078d7]"><Spring /></Cell>
      <Cell className="w-[48px]" bar={running}><Clock /></Cell>
      <Cell className="w-[47px]" bar="inset-x-[4px] h-px bg-[#0078d7]"><Telegram /></Cell>
      <Cell className="w-[47px]" bar="inset-x-[4px] h-px bg-[#0078d7]"><Photos /></Cell>
      <Cell className="w-[46px] bg-[#eff4f7]" bar="inset-x-0 h-px bg-[#0078d7]"><Cone size={23} /></Cell>
      <div className="flex flex-1 items-center pl-[9px] text-black">
        <Chevron />
        <span className="ml-[12px] pt-[2px]"><Wifi size={13} /></span>
        <div className="ml-[6px] flex w-[32px] flex-col items-center text-[12px] leading-[17px] tracking-[-0.400px]">
          <span>ENG</span>
          <span>IN</span>
        </div>
        <div className="ml-[7px] flex w-[62px] flex-col items-center text-[12px] leading-[17px] tracking-[-0.450px]">
          <span>20:13</span>
          <span>06-03-2022</span>
        </div>
        <svg className="ml-[16px]" width="17" height="17" viewBox="0 0 17 17" fill="none" stroke="#111" strokeWidth="1.200">
          <path d="M.7 1.700h15.600v11h-4.500L9 15.500l-2.200-2.800H.7z" />
        </svg>
      </div>
      <div className="w-[4px] border-l border-[#9fadb5]" />
    </div>
  );
}

export default function App() {
  return (
    <div className="flex h-[767px] w-[1365px] flex-col overflow-hidden font-['Open_Sans','Noto_Sans',sans-serif] text-black">
      <TitleBar />
      <MenuBar />
      <div className="h-[632px] bg-black pl-[75px] pt-[16px]">
        <div className="flex h-[601px] w-[1215px] flex-col">
          <div className="flex h-[565px]">
            <SharedScreen />
            <Chat />
          </div>
          <RecordedTaskbar />
        </div>
      </div>
      <Controls />
      <Taskbar />
    </div>
  );
}
